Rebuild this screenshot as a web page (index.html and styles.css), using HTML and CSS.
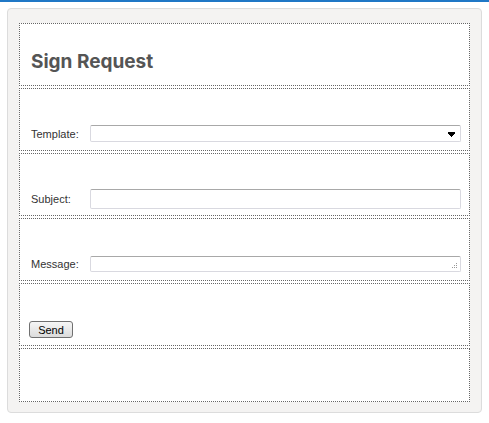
FILE: index.html
```html
<!DOCTYPE html>
<html>
<head>
<meta charset="utf-8">
<link rel="stylesheet" href="styles.css">
</head>
<body>
<div class="topbar"></div>
<div class="panel">
  <div class="frame">
    <div class="row title-row">
      <h1 class="title">Sign Request</h1>
    </div>
    <div class="row">
      <div class="field">
        <label class="label">Template:</label>
        <div class="select">
          <svg class="arrow" width="7" height="5" viewBox="0 0 7 5"><path d="M0 0H7V2H6V3H5V4H4V5H3V4H2V3H1V2H0Z" fill="#000"/></svg>
        </div>
      </div>
    </div>
    <div class="row subject-row">
      <div class="field">
        <label class="label">Subject:</label>
        <div class="input"></div>
      </div>
    </div>
    <div class="row">
      <div class="field">
        <label class="label">Message:</label>
        <div class="textarea">
          <svg class="grip" width="6" height="6" viewBox="0 0 6 6"><g fill="#999"><rect x="5" y="0" width="1" height="1"/><rect x="5" y="2" width="1" height="1"/><rect x="3" y="2" width="1" height="1"/><rect x="5" y="4" width="1" height="1"/><rect x="3" y="4" width="1" height="1"/><rect x="1" y="4" width="1" height="1"/></g></svg>
        </div>
      </div>
    </div>
    <div class="row send-row">
      <div class="field">
        <button class="btn">Send</button>
      </div>
    </div>
    <div class="row last-row"></div>
  </div>
</div>
</body>
</html>
```

FILE: styles.css
```css
html, body {
  margin: 0;
  padding: 0;
  background: #fff;
  font-family: "Liberation Sans", Arial, sans-serif;
}
.topbar {
  height: 2px;
  background: #2078c6;
}
.panel {
  margin: 6px 7px 0 7px;
  width: 475px;
  box-sizing: border-box;
  background: #f4f3f2;
  border: 1px solid #dcdcdc;
  border-radius: 4px;
  padding: 14px 11px 10px 11px;
}
.frame {
  display: flex;
  flex-direction: column;
  gap: 2px;
  background: #fff;
}
.row {
  height: 63px;
  box-sizing: border-box;
  border: 1px dotted #666;
  display: flex;
  align-items: flex-end;
  padding: 0 8px 8px 11px;
  background: #fff;
}
.title-row {
  padding-bottom: 12px;
}
.subject-row {
  padding-bottom: 6px;
}
.send-row {
  padding-bottom: 7px;
}
.last-row {
  height: 54px;
}
.title {
  margin: 0;
  font-family: Inter, Lato, sans-serif;
  font-weight: 700;
  font-size: 19px;
  line-height: 22px;
  color: #555;
}
.field {
  display: flex;
  align-items: center;
  width: 100%;
}
.label {
  width: 59px;
  flex: none;
  font-size: 11px;
  color: #333;
}
.select, .input, .textarea {
  flex: 1;
  box-sizing: border-box;
  background: #fff;
  border: 1px solid #d9d9e0;
  border-top-color: #a8a8a8;
  border-radius: 2px;
  display: flex;
  align-items: center;
  justify-content: flex-end;
}
.select {
  height: 17px;
  padding-right: 5px;
}
.arrow {
  display: block;
  margin-top: 2px;
}
.input {
  height: 20px;
}
.textarea {
  height: 16px;
  align-items: flex-end;
  padding: 0 3px 2px 0;
}
.grip {
  display: block;
}
.btn {
  margin: 0 0 0 -2px;
  width: 44px;
  height: 17px;
  padding: 0;
  font-family: "Liberation Sans", Arial, sans-serif;
  font-size: 11px;
  color: #000;
  border: 1px solid #707070;
  border-radius: 3px;
  background: linear-gradient(#f6f6f6, #dcdcdc);
}
```
